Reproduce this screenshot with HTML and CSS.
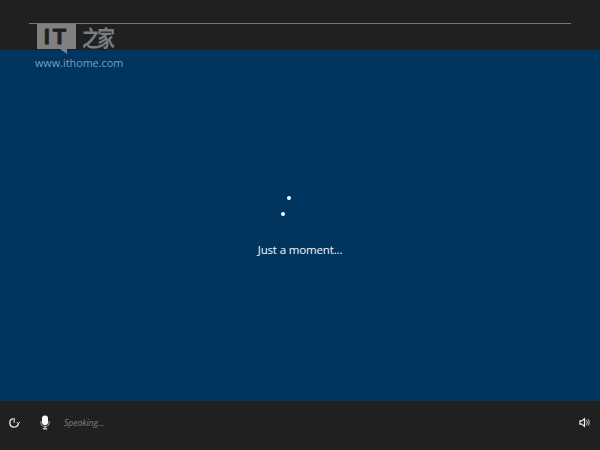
FILE: index.html
```html
<!DOCTYPE html>
<html lang="en">
<head>
<meta charset="utf-8">
<title>Just a moment...</title>
<link rel="stylesheet" href="styles.css">
</head>
<body>
<div class="screen">
  <header class="top"><div class="progress"></div></header>
  <main class="middle">
    <div class="spinner">
      <span class="dot dot-a"></span>
      <span class="dot dot-b"></span>
    </div>
    <p class="message">Just a moment...</p>
  </main>
  <footer class="bottom">
    <svg class="icon ease" viewBox="0 0 14 14" aria-hidden="true">
      <path d="M5.6 2.8A4.6 4.6 0 1 0 11.2 7.6" fill="none" stroke="#f0f0f0" stroke-width="1.4"/>
      <path d="M6.6 2.2V7.2" fill="none" stroke="#e8e8e8" stroke-width="1.2"/>
      <path d="M9.4 6.4 L11.2 8.2 L13 6.4" fill="none" stroke="#e0e0e0" stroke-width="1"/>
    </svg>
    <svg class="icon mic" viewBox="0 0 12 16" aria-hidden="true">
      <rect x="2.8" y="0.4" width="6.4" height="10.4" rx="3" fill="#f7f7f7"/>
      <path d="M1.6 6.5V8a4.4 4.4 0 0 0 8.8 0V6.5" fill="none" stroke="#b9a77a" stroke-width="1.1"/>
      <path d="M6 12v2.4M3.6 14.8h4.8" stroke="#d6d6d6" stroke-width="1.2"/>
    </svg>
    <span class="status">Speaking...</span>
    <svg class="icon speaker" viewBox="0 0 12 12" aria-hidden="true">
      <path d="M1 4.2H3L6 1.8V10.2L3 7.8H1Z" fill="none" stroke="#f2f2f2" stroke-width="1.3"/>
      <path d="M8 3.6a3.4 3.4 0 0 1 0 4.8M9.6 2.4a5 5 0 0 1 0 7.2" fill="none" stroke="#e6e6e6" stroke-width="1"/>
    </svg>
  </footer>
  <div class="watermark">
    <div class="brand">
      <div class="bubble">IT</div>
      <span class="brand-cn">之家</span>
    </div>
    <div class="site">www.ithome.com</div>
  </div>
</div>
</body>
</html>
```
FILE: styles.css
```css
html, body {
  margin: 0;
  padding: 0;
  background: #1f1f1f;
}
.screen {
  position: relative;
  width: 600px;
  height: 450px;
  display: flex;
  flex-direction: column;
  overflow: hidden;
  font-family: "Open Sans", "Noto Sans", sans-serif;
}
.top {
  height: 50px;
  flex: none;
  background: #202020;
  padding: 23px 29px 0;
  box-sizing: border-box;
}
.progress {
  height: 1px;
  background: #777;
}
.middle {
  flex: 1;
  background: #00355f;
  display: flex;
  flex-direction: column;
  align-items: center;
}
.spinner {
  position: relative;
  width: 40px;
  height: 40px;
  margin-top: 128px;
}
.dot {
  position: absolute;
  width: 4px;
  height: 4px;
  border-radius: 50%;
  background: #fff;
}
.dot-a { left: 7px; top: 18px; }
.dot-b { left: 1px; top: 34px; }
.message {
  margin: 23px 0 0;
  color: #f6f8fa;
  font-size: 11.5px;
  line-height: 17px;
  letter-spacing: -0.15px;
}
.bottom {
  height: 49px;
  flex: none;
  background: #202020;
  display: flex;
  align-items: center;
  padding: 0 10px 7px 8px;
  box-sizing: border-box;
}
.icon { flex: none; display: block; }
.ease { width: 13px; height: 13px; }
.mic { width: 12px; height: 15px; margin-left: 18px; }
.status {
  flex: 1;
  margin-left: 13px;
  color: #7c8084;
  font-size: 8.5px;
  font-style: italic;
}
.speaker { width: 11px; height: 11px; }
.watermark {
  position: absolute;
  left: 35px;
  top: 24px;
  display: flex;
  flex-direction: column;
}
.brand {
  display: flex;
  align-items: flex-start;
  margin-left: 2px;
}
.bubble {
  position: relative;
  width: 39px;
  height: 25px;
  background: #808080;
  color: #1f1f1f;
  font: 700 22px/25px "Liberation Sans", sans-serif;
  -webkit-text-stroke: 0.8px #1f1f1f;
  text-align: center;
  letter-spacing: 3px;
}
.bubble::after {
  content: "";
  position: absolute;
  right: 9px;
  top: 25px;
  border-top: 5px solid #808080;
  border-left: 7px solid transparent;
}
.brand-cn {
  margin-left: 6px;
  color: #787d81;
  font: 700 22px/25px "Noto Sans CJK SC", sans-serif;
  letter-spacing: -3px;
  transform: scaleX(0.8);
  transform-origin: left center;
}
.site {
  margin-top: 7px;
  color: #7a9fc0;
  font: 10.8px/14px "Open Sans", sans-serif;
}
```
